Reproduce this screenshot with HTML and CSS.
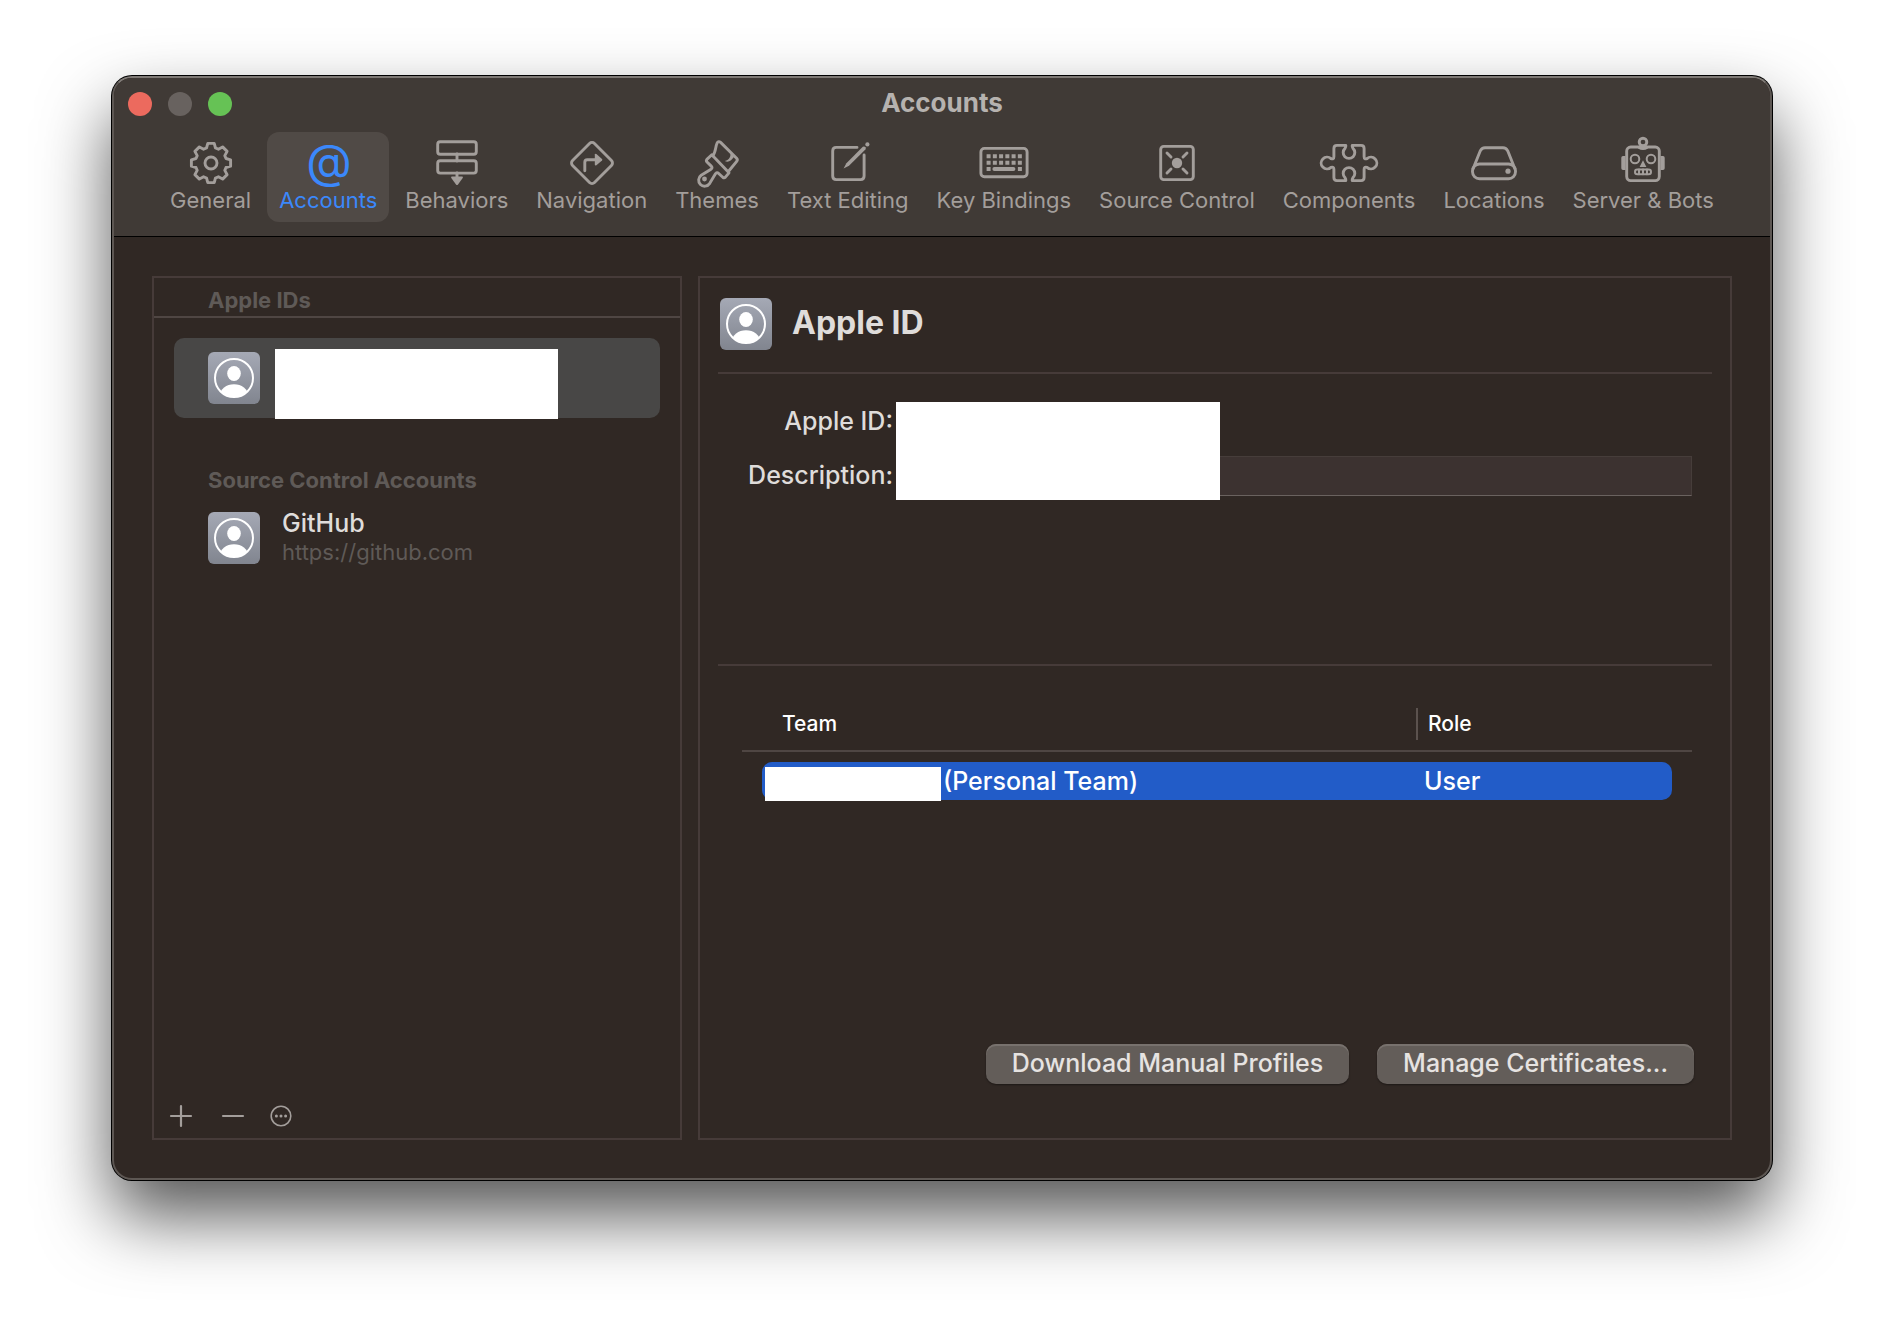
FILE: index.html
```html
<!DOCTYPE html>
<html lang="en">
<head>
<meta charset="utf-8">
<title>Accounts</title>
<link rel="stylesheet" href="styles.css">
</head>
<body>
<svg class="defs" aria-hidden="true">
  <defs>
    <clipPath id="avatar-clip"><circle cx="26" cy="26" r="19"/></clipPath>
    <symbol id="avatar" viewBox="0 0 52 52">
      <circle cx="26" cy="26" r="19" fill="none" stroke="#fff" stroke-width="2"/>
      <ellipse cx="26" cy="21.5" rx="6.8" ry="7.5" fill="#fff"/>
      <ellipse cx="26" cy="43.3" rx="14" ry="11" fill="#fff" clip-path="url(#avatar-clip)"/>
    </symbol>
  </defs>
</svg>

<main class="window">
  <header class="header">
    <div class="titlebar">
      <div class="lights">
        <button class="light close" aria-label="Close"></button>
        <button class="light minimize" aria-label="Minimize" disabled></button>
        <button class="light zoom" aria-label="Zoom"></button>
      </div>
      <h1 class="title">Accounts</h1>
    </div>
    <nav class="tabs">
      <button class="tab">
        <svg class="icon" viewBox="0 0 60 50"><g transform="translate(30 27)"><path d="M-4.5-15-3.2-19.6H3.2L4.5-15 7.4-13.8 11.6-16.1 16.1-11.6 13.8-7.4 15-4.5 19.6-3.2V3.2L15 4.5 13.8 7.4 16.1 11.6 11.6 16.1 7.4 13.8 4.5 15 3.2 19.6H-3.2L-4.5 15-7.4 13.8-11.6 16.1-16.1 11.6-13.8 7.4-15 4.5-19.6 3.2V-3.2L-15-4.5-13.8-7.4-16.1-11.6-11.6-16.1-7.4-13.8Z"/><circle r="6"/></g></svg>
        <span>General</span>
      </button>
      <button class="tab selected" aria-current="page">
        <svg class="icon" viewBox="0 0 60 50"><text class="at" x="31" y="42" text-anchor="middle">@</text></svg>
        <span>Accounts</span>
      </button>
      <button class="tab">
        <svg class="icon" viewBox="0 0 60 50"><rect x="10.7" y="5.8" width="38.6" height="12.4" rx="2.5"/><rect x="10.7" y="24.7" width="38.6" height="12.4" rx="2.5"/><path d="M30 18v7M30 37v5"/><path class="solid" d="M24.8 40.5h10.4q1.2.4.5 1.6L31 48.6q-1 1-2 0l-4.7-6.5q-.7-1.2.5-1.6Z"/></svg>
        <span>Behaviors</span>
      </button>
      <button class="tab">
        <svg class="icon" viewBox="0 0 60 50"><g transform="translate(30 27)"><rect x="-15.5" y="-15.5" width="31" height="31" rx="3.5" transform="rotate(45)"/><path d="M-7.2 7.7V-.8Q-7.2-3.3-4.7-3.3H3"/><path class="solid" d="M2.8-8.4q.4-1.3 1.6-.5l5.6 4.8q.8.8 0 1.6L4.4 2.3q-1.2.8-1.6-.5Z"/></g></svg>
        <span>Navigation</span>
      </button>
      <button class="tab">
        <svg class="icon" viewBox="0 0 60 50"><path d="M25.8 19.8C29 16 28.3 10.5 30.2 6.8Q31.6 4.6 33.6 6.4L49.6 22.2Q51 23.8 49.7 25.3L41.8 35"/><path d="M24.8 18.8 19.9 23.4Q18.8 24.8 20 26L24.5 30.4Q25.8 31.8 24 33.2L14.2 39.3A6 6 0 1 0 22.6 47.6L28.6 37.6Q30 36 31.4 37.2L35.8 41.3Q37.2 42.4 38.4 41.2L42 36.8Z"/><circle class="solid" cx="17.5" cy="43" r="2.4"/><path class="solid" d="M43 15.5C44.5 20 42.5 24 37.8 25Q43 27.5 47.5 20Z"/></svg>
        <span>Themes</span>
      </button>
      <button class="tab">
        <svg class="icon" viewBox="0 0 60 50"><path d="M39 11.4H18.2Q14.7 11.4 14.7 14.9V40.1Q14.7 43.6 18.2 43.6H42.6Q46.1 43.6 46.1 40.1V19"/><path class="solid" d="M25.6 32.6 28.4 27.2 44.8 10.8Q46.6 10.2 47.4 11.2 48.2 12.4 47.4 13.4L31 29.8Z"/><circle class="solid" cx="49.4" cy="8.4" r="2.1"/></svg>
        <span>Text Editing</span>
      </button>
      <button class="tab">
        <svg class="icon" viewBox="0 0 60 50"><rect x="6.9" y="12.4" width="46.2" height="28.4" rx="3.5"/><path class="keys" d="M12.6 20.3h35.3M12.6 26.7h35.3M12.6 33h4M43.9 33h4"/><path class="bar" d="M20.4 33H39.4"/></svg>
        <span>Key Bindings</span>
      </button>
      <button class="tab">
        <svg class="icon" viewBox="0 0 60 50"><rect x="13.7" y="10.4" width="32.6" height="33.2" rx="3"/><circle class="solid" cx="30" cy="27" r="5.2"/><path d="M20 17l4 4M40 17l-4 4M20 37l4-4M40 37l-4-4"/></svg>
        <span>Source Control</span>
      </button>
      <button class="tab">
        <svg class="icon" viewBox="0 0 60 50"><path d="M14.9 20.5V12.4Q14.9 9.4 17.9 9.4H26.8Q27 11 26 12.4A5.8 5.8 0 1 0 34 12.4Q33 11 33.2 9.4H42.1Q45.1 9.4 45.1 12.4V20.5Q45.1 23.8 48 22.6A5.9 5.9 0 1 1 48 31.4Q45.1 30.2 45.1 33.5V41.6Q45.1 44.6 42.1 44.6H33.2Q33 43 34 41.6A5.8 5.8 0 1 0 26 41.6Q27 43 26.8 44.6H17.9Q14.9 44.6 14.9 41.6V33.5Q14.9 30.2 12 31.4A5.9 5.9 0 1 1 12 22.6Q14.9 23.8 14.9 20.5Z"/></svg>
        <span>Components</span>
      </button>
      <button class="tab">
        <svg class="icon" viewBox="0 0 60 50"><rect x="8.5" y="28" width="43" height="14.8" rx="7"/><path d="M9.2 32.5 16.3 14.8Q17.8 11.7 21 11.7H39Q42.2 11.7 43.7 14.8L50.8 32.5"/><circle class="solid" cx="44" cy="35.2" r="2.6"/></svg>
        <span>Locations</span>
      </button>
      <button class="tab">
        <svg class="icon" viewBox="0 0 60 50"><rect x="13.7" y="11" width="32.6" height="33.6" rx="4"/><circle cx="30" cy="6" r="3.8"/><path class="solid" d="M25 12.5q0-3.5 5-3.5t5 3.5q-5 3-10 0ZM12.5 20H10q-1.7 0-1.7 1.7v10.6q0 1.7 1.7 1.7h2.5ZM47.5 20H50q1.7 0 1.7 1.7v10.6q0 1.7-1.7 1.7h-2.5ZM30 24.2 33.4 31H26.6Z"/><circle class="thin" cx="22" cy="23" r="4.3"/><circle class="thin" cx="38" cy="23" r="4.3"/><rect class="thin" x="22" y="33.6" width="16" height="4.6" rx="2.3"/><path class="thin" d="M26 33.6v4.6M30 33.6v4.6M34 33.6v4.6"/></svg>
        <span>Server &amp; Bots</span>
      </button>
    </nav>
  </header>

  <div class="content">
    <section class="panel sidebar">
      <h2 class="group group-first">Apple IDs</h2>
      <div class="account current">
        <svg class="avatar"><use href="#avatar"/></svg>
        <span class="redacted redacted-account"></span>
      </div>
      <h2 class="group">Source Control Accounts</h2>
      <div class="account">
        <svg class="avatar"><use href="#avatar"/></svg>
        <div class="account-text">
          <span class="account-name">GitHub</span>
          <span class="account-url">https://github.com</span>
        </div>
      </div>
      <footer class="actions">
        <button class="action" aria-label="Add account"><svg viewBox="0 0 24 24"><path d="M12 2v20M2 12h20"/></svg></button>
        <button class="action" aria-label="Remove account"><svg viewBox="0 0 24 24"><path d="M2 12h20"/></svg></button>
        <button class="action" aria-label="More"><svg viewBox="0 0 24 24"><circle class="ring" cx="12" cy="12" r="9.8"/><circle class="dot" cx="7.4" cy="12" r="1.5"/><circle class="dot" cx="12" cy="12" r="1.5"/><circle class="dot" cx="16.6" cy="12" r="1.5"/></svg></button>
      </footer>
    </section>

    <section class="panel detail">
      <div class="detail-head">
        <svg class="avatar"><use href="#avatar"/></svg>
        <h2 class="detail-title">Apple ID</h2>
      </div>
      <form class="form">
        <span class="label">Apple ID:</span>
        <span></span>
        <label class="label" for="description">Description:</label>
        <input class="field" id="description" type="text">
        <span class="redacted redacted-form"></span>
      </form>
      <table class="teams">
        <thead>
          <tr><th class="col-team">Team</th><th class="col-role"><span class="divided">Role</span></th></tr>
        </thead>
        <tbody>
          <tr><td><div class="team"><span class="redacted redacted-team"></span>(Personal Team)</div></td><td>User</td></tr>
        </tbody>
      </table>
      <div class="buttons">
        <button class="push">Download Manual Profiles</button>
        <button class="push">Manage Certificates...</button>
      </div>
    </section>
  </div>
</main>
</body>
</html>
```
FILE: styles.css
```css
* {
  box-sizing: border-box;
}

body {
  margin: 0;
  min-height: 100vh;
  padding: 76px 112px 148px;
  display: flex;
  background: #fff;
  color: #dfdcda;
  font-family: Inter, "Liberation Sans", sans-serif;
  font-size: 25px;
  font-weight: 500;
  line-height: 32px;
}

button {
  padding: 0;
  border: 0;
  background: none;
  color: inherit;
  font: inherit;
}

h1,
h2 {
  margin: 0;
}

.defs {
  position: absolute;
  width: 0;
  height: 0;
}

.window {
  flex: 1;
  min-width: 0;
  display: flex;
  flex-direction: column;
  border: 2px solid #5d5753;
  border-top-color: #7f7a76;
  border-radius: 20px;
  background: #302824;
  box-shadow: 0 0 0 1px #000, 0 36px 70px rgba(0, 0, 0, 0.67);
}

/* Title bar and toolbar */

.header {
  padding-bottom: 14px;
  border-bottom: 1px solid #000;
  border-radius: 18px 18px 0 0;
  background: #403a36;
}

.titlebar {
  display: grid;
  grid-template-columns: 1fr auto 1fr;
  align-items: center;
  height: 54px;
  padding: 0 14px 2px;
}

.lights {
  display: flex;
  gap: 16px;
}

.light {
  width: 24px;
  height: 24px;
  border-radius: 50%;
}

.close {
  background: #ec6a5e;
}

.minimize {
  background: #68625f;
}

.zoom {
  background: #66c255;
}

.title {
  padding-bottom: 2px;
  color: #b6b2af;
  font-size: 26px;
  font-weight: 700;
}

.tabs {
  display: flex;
  justify-content: center;
  gap: 4px;
}

.tab {
  display: flex;
  flex-direction: column;
  align-items: center;
  height: 90px;
  padding: 4px 12px 0;
  border-radius: 12px;
  color: #a39e9b;
  font-size: 22px;
  font-weight: 400;
  line-height: 28px;
  white-space: nowrap;
}

.tab.selected {
  background: #504a46;
  color: #3b88fb;
}

.icon {
  width: 60px;
  height: 50px;
  overflow: visible;
  fill: none;
  stroke: currentColor;
  stroke-width: 2.9;
  stroke-linecap: round;
  stroke-linejoin: round;
}

.icon .solid {
  fill: currentColor;
  stroke: none;
}

.icon .thin {
  stroke-width: 2;
}

.icon .keys {
  stroke-width: 4;
  stroke-linecap: butt;
  stroke-dasharray: 4 2.25;
}

.icon .bar {
  stroke-width: 4;
}

.icon .at {
  fill: currentColor;
  stroke: none;
  font-size: 47px;
  font-weight: 400;
}

/* Panels */

.content {
  flex: 1;
  display: grid;
  grid-template-columns: 530fr 1034fr;
  gap: 16px;
  padding: 39px 38px 38px;
}

.panel {
  min-width: 0;
  display: flex;
  flex-direction: column;
  border: 2px solid #463b39;
}

.avatar {
  flex: none;
  width: 52px;
  height: 52px;
  border-radius: 6px;
  background: linear-gradient(#a5a9b5, #81858f);
}

.redacted {
  background: #fff;
}

.group {
  padding: 54px 54px 0;
  color: #5f5a57;
  font-size: 22px;
  font-weight: 700;
  line-height: 16px;
}

.group-first {
  height: 40px;
  padding-top: 14px;
  border-bottom: 2px solid #4f4643;
}

.account {
  display: flex;
  height: 80px;
  margin: 10px 20px 0;
  padding: 14px 34px;
}

.account.current {
  margin-top: 20px;
  border-radius: 10px;
  background: #484746;
}

.redacted-account {
  width: 283px;
  height: 70px;
  margin: -3px 0 0 15px;
}

.account-text {
  display: flex;
  flex-direction: column;
  padding-left: 22px;
}

.account-name {
  margin-top: -4px;
  line-height: 30px;
}

.account-url {
  color: #5f5a57;
  font-size: 22px;
  font-weight: 400;
  line-height: 28px;
}

.actions {
  display: flex;
  gap: 28px;
  margin-top: auto;
  padding: 0 15px 10px;
}

.action {
  width: 24px;
  height: 24px;
}

.action:last-child {
  margin-left: -4px;
}

.action svg {
  display: block;
  fill: none;
  stroke: #a39e9b;
  stroke-width: 2.2;
  stroke-linecap: round;
}

.action .ring {
  stroke-width: 1.6;
}

.action .dot {
  fill: #a39e9b;
  stroke: none;
}

/* Account details */

.detail {
  padding: 20px 18px 54px;
}

.detail-head {
  display: flex;
  align-items: center;
  gap: 20px;
  padding: 0 2px 22px;
  border-bottom: 2px solid #463b39;
}

.detail-title {
  margin-top: -2px;
  font-size: 32px;
  font-weight: 700;
}

.form {
  position: relative;
  display: grid;
  grid-template-columns: 175px 1fr;
  grid-template-rows: 40px 40px;
  gap: 14px 3px;
  height: 292px;
  padding: 28px 20px 0 0;
  border-bottom: 2px solid #463b39;
}

.label {
  line-height: 38px;
  text-align: right;
}

.field {
  width: 100%;
  height: 40px;
  padding: 0 8px;
  border: 1px solid #463d3a;
  border-bottom: 1px solid #6a625f;
  border-radius: 0;
  background: #3c3230;
  color: inherit;
  font: inherit;
}

.redacted-form {
  position: absolute;
  top: 28px;
  left: 178px;
  width: 324px;
  height: 98px;
}

.teams {
  table-layout: fixed;
  width: auto;
  margin: 42px 20px 0 24px;
  border-collapse: separate;
  border-spacing: 0;
  text-align: left;
}

.teams th {
  height: 44px;
  padding: 0 0 10px;
  border-bottom: 2px solid #4f4643;
  color: #fff;
  font-size: 21px;
  font-weight: 500;
}

.teams .col-team {
  padding-left: 40px;
}

.teams .col-role {
  width: 276px;
}

.divided {
  display: block;
  padding-left: 10px;
  border-left: 2px solid #5b524e;
}

.teams td {
  padding: 0 8px;
  border-top: 10px solid transparent;
  background: #225cc8;
  background-clip: padding-box;
  color: #fff;
  line-height: 38px;
}

.teams td:first-child {
  padding-left: 3px;
  border-left: 20px solid transparent;
  border-top-left-radius: 30px 20px;
  border-bottom-left-radius: 30px 10px;
}

.teams td:last-child {
  border-right: 20px solid transparent;
  border-top-right-radius: 30px 20px;
  border-bottom-right-radius: 30px 10px;
}

.team {
  display: flex;
  gap: 2px;
  height: 38px;
}

.redacted-team {
  width: 176px;
  height: 34px;
  margin-top: 5px;
}

.buttons {
  display: flex;
  justify-content: flex-end;
  gap: 28px;
  margin-top: auto;
  padding-right: 18px;
}

.push {
  height: 40px;
  padding: 0 26px 2px;
  border-radius: 10px;
  background: #635d59;
  box-shadow: inset 0 2px 0 #77716d, 0 1px 2px rgba(0, 0, 0, 0.4);
  color: #e6e3e1;
  white-space: nowrap;
}
```
